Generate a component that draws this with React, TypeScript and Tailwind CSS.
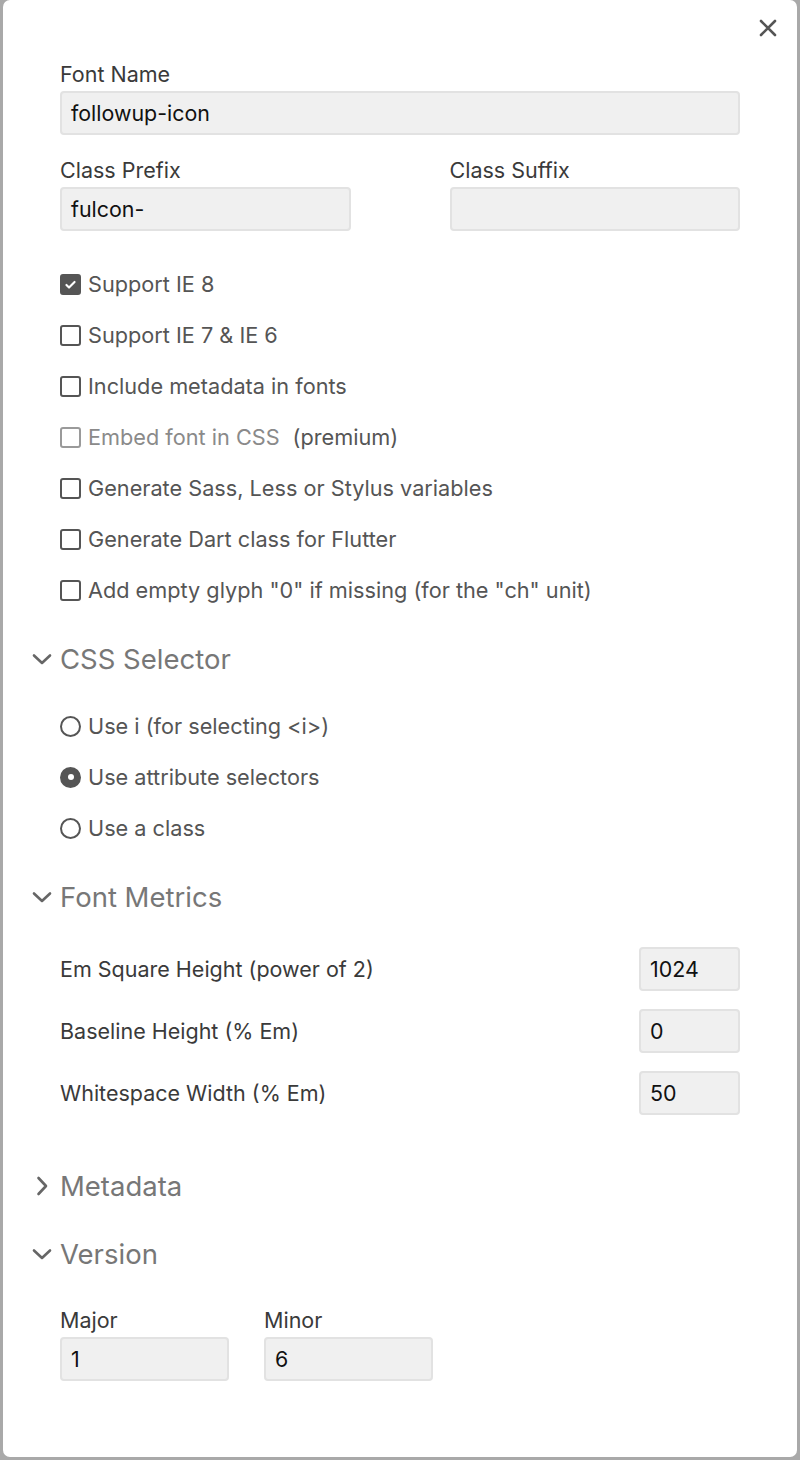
import { Fragment } from "react";

const FONT = { fontFamily: 'Inter, "Noto Sans", sans-serif' };

type Opt = { label: string; checked?: boolean; disabled?: boolean; extra?: string };

const CHECKS: Opt[] = [
  { label: "Support IE 8", checked: true },
  { label: "Support IE 7 & IE 6" },
  { label: "Include metadata in fonts" },
  { label: "Embed font in CSS", disabled: true, extra: "(premium)" },
  { label: "Generate Sass, Less or Stylus variables" },
  { label: "Generate Dart class for Flutter" },
  { label: 'Add empty glyph "0" if missing (for the "ch" unit)' },
];

const RADIOS: Opt[] = [
  { label: "Use i (for selecting <i>)" },
  { label: "Use attribute selectors", checked: true },
  { label: "Use a class" },
];

const METRICS = [
  { label: "Em Square Height (power of 2)", value: "1024" },
  { label: "Baseline Height (% Em)", value: "0" },
  { label: "Whitespace Width (% Em)", value: "50" },
];

function Field({ value, className = "" }: { value: string; className?: string }) {
  return (
    <div
      className={
        "flex h-[44px] items-center rounded-[4px] border-2 border-[#e2e2e2] bg-[#f0f0f0] px-[9px] pt-[1px] text-[21.4px] text-[#111] " +
        className
      }
    >
      {value}
    </div>
  );
}

function Label({ children }: { children: string }) {
  return <div className="h-[28px] text-[21.5px] leading-[29px] text-[#3a3a3a]">{children}</div>;
}

function Checkbox({ opt }: { opt: Opt }) {
  const color = opt.disabled ? "border-[#9a9a9a]" : "border-[#555]";
  return (
    <div className="flex h-[51px] items-center pt-[1px]">
      <span
        className={[
          "flex h-[21px] w-[21px] shrink-0 items-center justify-center rounded-[3px] border-2",
          color,
          opt.checked ? "bg-[#555]" : "bg-white",
        ].join(" ")}
      >
        {opt.checked && (
          <svg width="13" height="13" viewBox="0 0 16 16" fill="none">
            <path d="M3 8.5l3.2 3.2L13 4.8" stroke="white" strokeWidth="2.6" strokeLinecap="round" strokeLinejoin="round" />
          </svg>
        )}
      </span>
      <span className={"ml-[7px] text-[21.7px] " + (opt.disabled ? "text-[#8a8a8a]" : "text-[#555]")}>
        {opt.label}
      </span>
      {opt.extra && <span className="ml-[13px] text-[21.7px] text-[#555]">{opt.extra}</span>}
    </div>
  );
}

function Radio({ opt }: { opt: Opt }) {
  return (
    <div className="flex h-[51px] items-center pt-[1px]">
      <span
        className={[
          "flex h-[21px] w-[21px] shrink-0 items-center justify-center rounded-full border-2 border-[#555]",
          opt.checked ? "bg-[#555]" : "bg-white",
        ].join(" ")}
      >
        {opt.checked && <span className="h-[6px] w-[6px] rounded-full bg-white" />}
      </span>
      <span className="ml-[7px] text-[21.7px] text-[#555]">{opt.label}</span>
    </div>
  );
}

function Heading({ title, open = true, className = "" }: { title: string; open?: boolean; className?: string }) {
  return (
    <div className={"ml-[-29px] flex h-[36px] items-center pt-[1px] " + className}>
      <span className="flex w-[29px] shrink-0 items-center justify-start">
        {open ? (
          <svg width="20" height="12" viewBox="0 0 20 12" fill="none" className="ml-[1px]">
            <path d="M2 2.5l8 7.5 8-7.5" stroke="#666" strokeWidth="2.6" strokeLinecap="round" strokeLinejoin="round" />
          </svg>
        ) : (
          <svg width="12" height="20" viewBox="0 0 12 20" fill="none" className="ml-[5px]">
            <path d="M2.5 2l7.5 8-7.5 8" stroke="#666" strokeWidth="2.6" strokeLinecap="round" strokeLinejoin="round" />
          </svg>
        )}
      </span>
      <span className="text-[27.5px] leading-[36px] text-[#777]">{title}</span>
    </div>
  );
}

export default function App() {
  return (
    <div className="min-h-[1460px] bg-[#a9a9a9] px-[3px] pb-[3px]" style={FONT}>
      <div className="relative h-[1457px] rounded-[7px] bg-white pl-[57px] pr-[57px] pt-[60px]">
        <button className="absolute right-[20px] top-[19px] flex h-[18px] w-[18px] items-center justify-center" aria-label="Close">
          <svg width="18" height="18" viewBox="0 0 18 18" fill="none">
            <path d="M2 2l14 14M16 2L2 16" stroke="#555" strokeWidth="2.6" strokeLinecap="round" />
          </svg>
        </button>

        <Label>Font Name</Label>
        <Field value="followup-icon" className="mt-[3px]" />

        <div className="mt-[21px] grid grid-cols-2 gap-x-[99px]">
          <div>
            <Label>Class Prefix</Label>
            <Field value="fulcon-" className="mt-[3px]" />
          </div>
          <div>
            <Label>Class Suffix</Label>
            <Field value="" className="mt-[3px]" />
          </div>
        </div>

        <div className="mt-[27px] flex flex-col">
          {CHECKS.map((c) => (
            <Checkbox key={c.label} opt={c} />
          ))}
        </div>

        <Heading title="CSS Selector" className="mt-[25px]" />
        <div className="mt-[24px] flex flex-col">
          {RADIOS.map((r) => (
            <Radio key={r.label} opt={r} />
          ))}
        </div>

        <Heading title="Font Metrics" className="mt-[25px]" />
        <div className="mt-[33px] flex flex-col gap-[18px]">
          {METRICS.map((m) => (
            <Fragment key={m.label}>
              <div className="flex items-center justify-between">
                <span className="pt-[1px] text-[21.5px] text-[#3a3a3a]">{m.label}</span>
                <Field value={m.value} className="w-[101px]" />
              </div>
            </Fragment>
          ))}
        </div>

        <Heading title="Metadata" open={false} className="mt-[52px]" />
        <Heading title="Version" className="mt-[32px]" />

        <div className="mt-[35px] flex gap-[35px]">
          <div className="w-[169px]">
            <Label>Major</Label>
            <Field value="1" className="mt-[3px]" />
          </div>
          <div className="w-[169px]">
            <Label>Minor</Label>
            <Field value="6" className="mt-[3px]" />
          </div>
        </div>
      </div>
    </div>
  );
}
